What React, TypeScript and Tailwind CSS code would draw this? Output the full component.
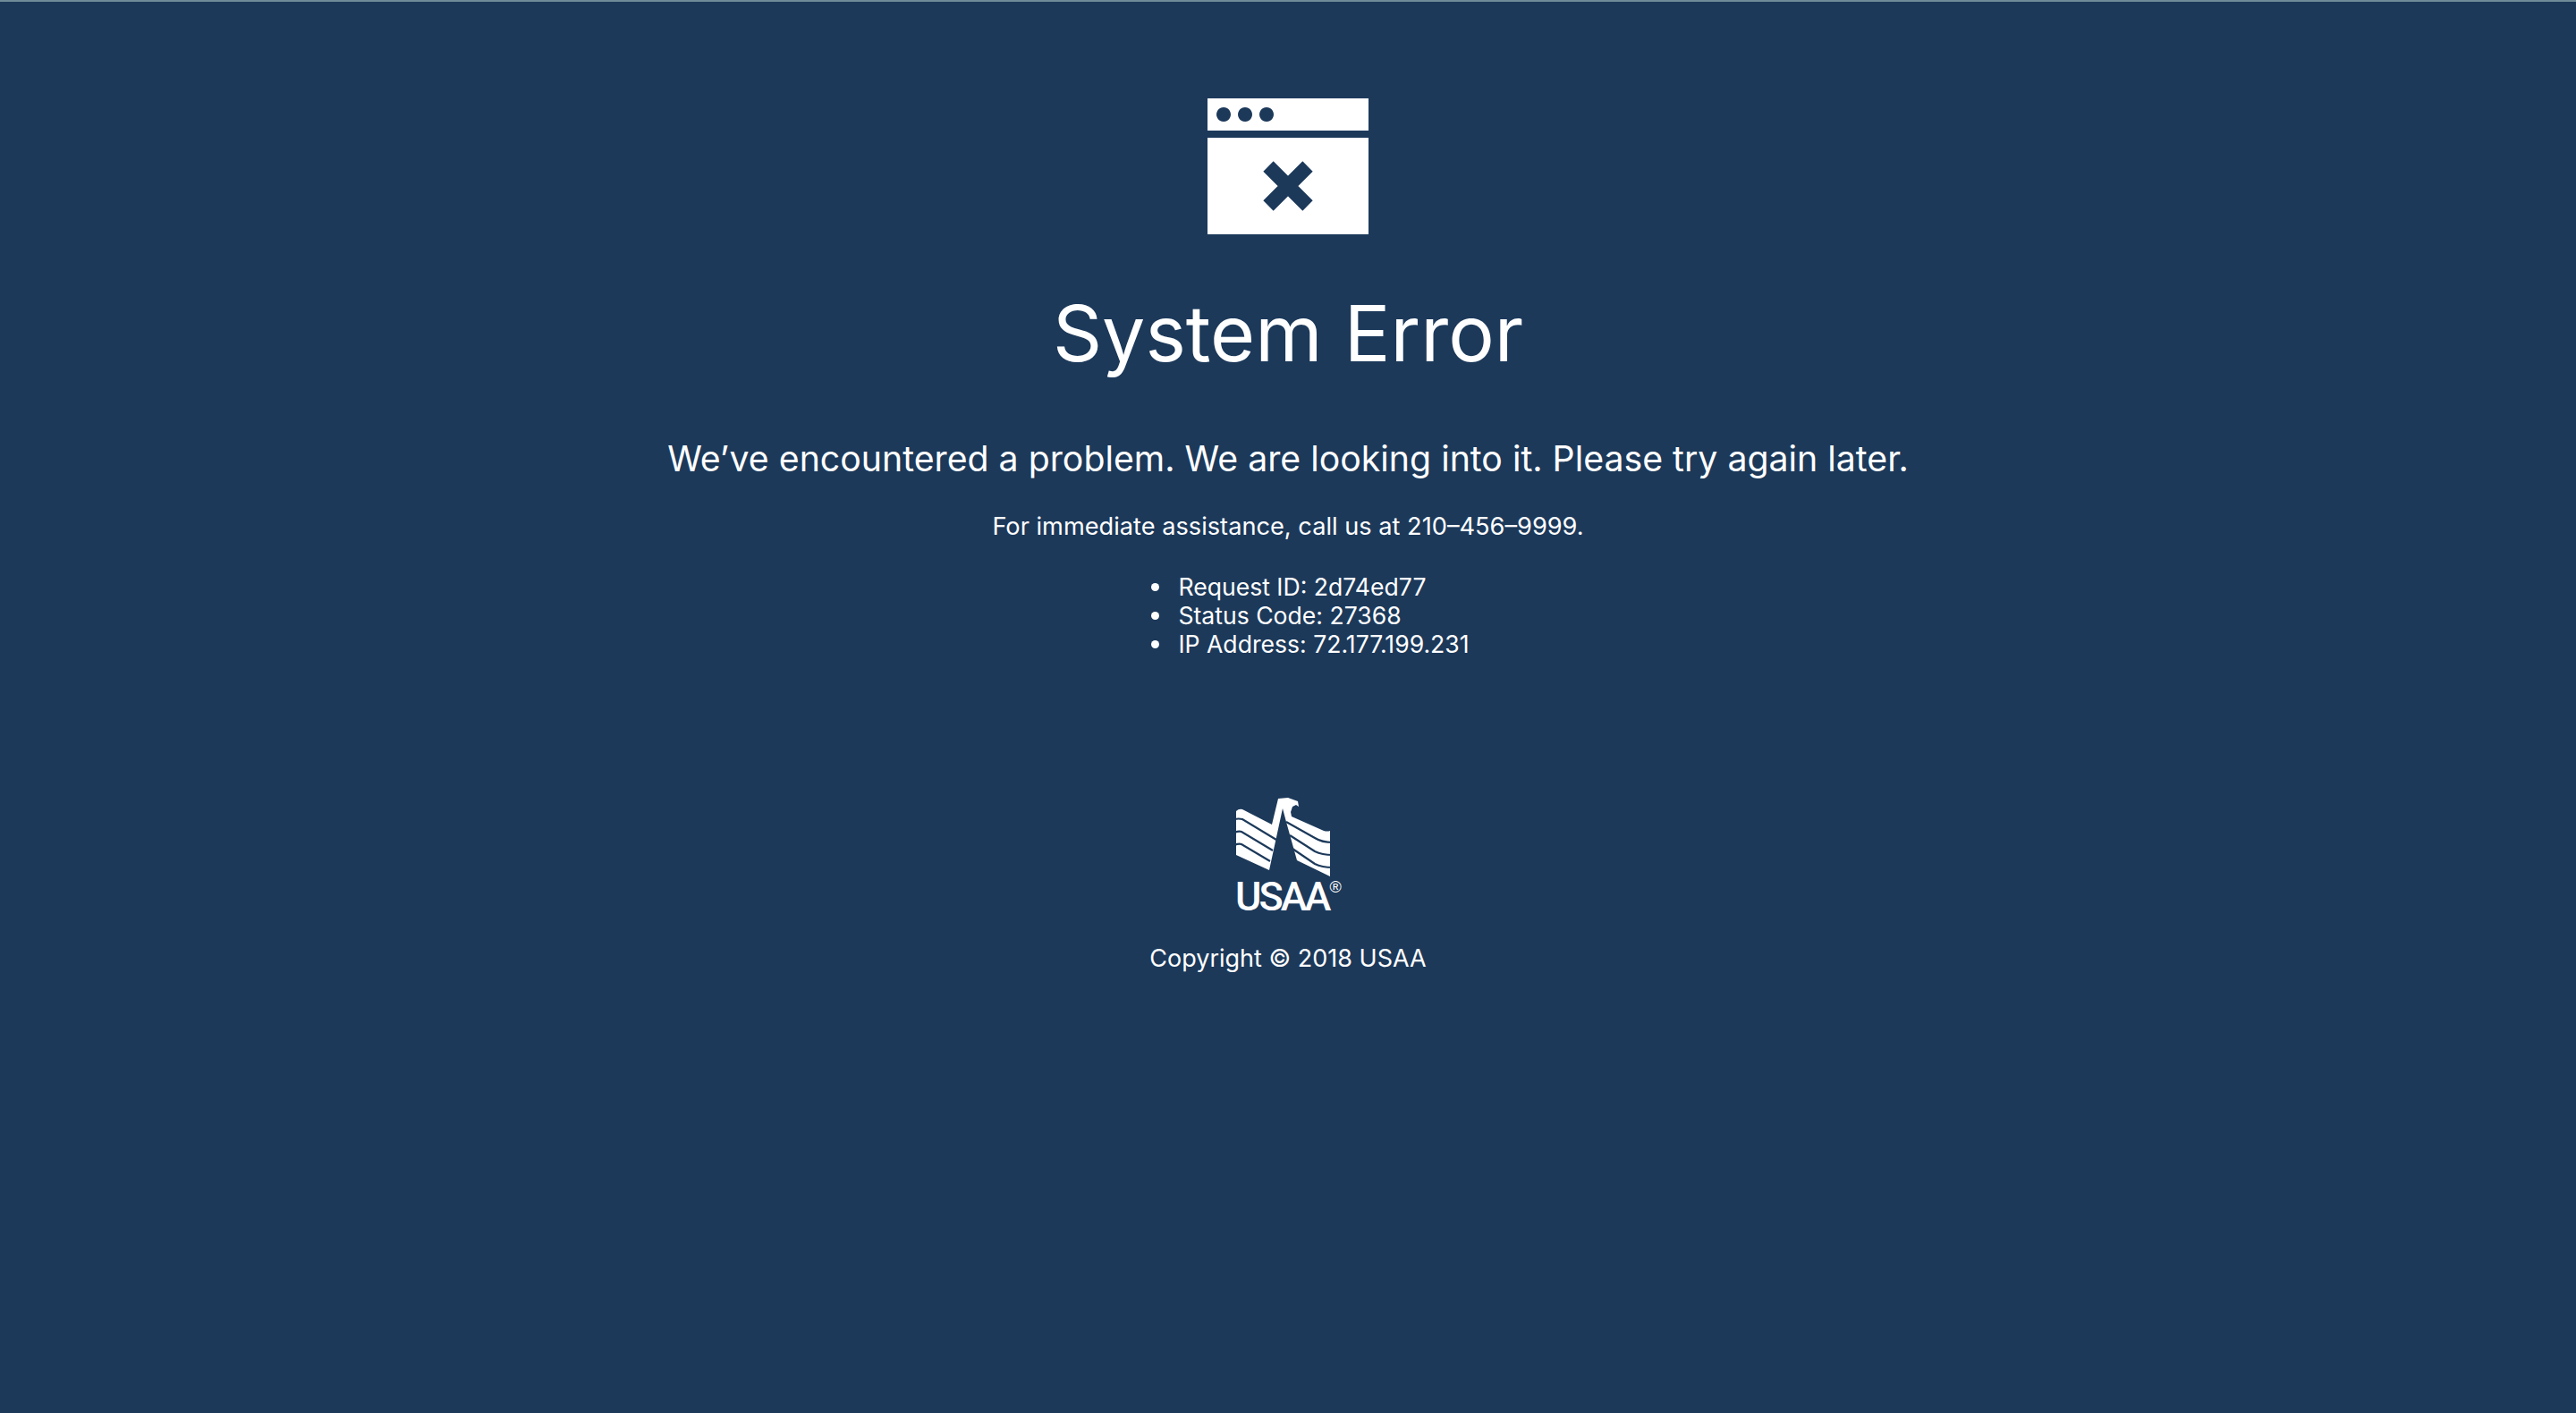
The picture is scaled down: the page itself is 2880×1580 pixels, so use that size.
const font = "font-['Inter','Liberation_Sans',sans-serif]";

function ErrorIcon() {
  return (
    <svg width="180" height="152" viewBox="0 0 180 152" className="block">
      <path
        fill="#fff"
        fillRule="evenodd"
        d="M0 0H180V36H0ZM18 10a8 8 0 1 0 0.01 0ZM42 10a8 8 0 1 0 0.01 0ZM66 10a8 8 0 1 0 0.01 0Z"
      />
      <rect x="0" y="44" width="180" height="108" fill="#fff" />
      <path d="M68 76L112 120M112 76L68 120" stroke="#1c395a" strokeWidth="16" />
    </svg>
  );
}

function UsaaLogo() {
  return (
    <div className="w-[120px]">
      <svg width="110" height="92" viewBox="0 0 110 92" className="block">
        <path
          fill="#fff"
          d="M2 18Q5 15 9 16L42 33L49 4L60 3L71 7L72 13L69 11L65 13L63 19L64 24L100 40Q104 41 107 40L107 91L70 73L58 30L54 15L39 84L2 67Z"
        />
        <g fill="none" stroke="#1c395a" strokeWidth="2.2">
          <path d="M0 27Q5 26 9 27L47 50" />
          <path d="M0 42Q5 40 8 41L43 62" />
          <path d="M0 56Q5 54 8 55L40 74" />
          <path d="M58 30L90 48Q98 53 110 53" />
          <path d="M62 45L90 63Q98 67 110 67" />
          <path d="M65 60L90 77Q98 81 110 81" />
        </g>
      </svg>
      <div className="flex items-start h-[44px] pl-[1px]">
        <span className="font-['Roboto',sans-serif] text-[45px] leading-[44px] font-medium tracking-[-3px]">USAA</span>
        <span className="ml-[1px] font-['Liberation_Sans',sans-serif] text-[18px] leading-[22px]">®</span>
      </div>
    </div>
  );
}

export default function App() {
  const rows = ["Request ID: 2d74ed77", "Status Code: 27368", "IP Address: 72.177.199.231"];
  return (
    <div className={`${font} min-h-[1580px] bg-[#1c395a] text-white flex flex-col items-center border-t-2 border-[#6f8b99]`}>
      <div className="mt-[108px]">
        <ErrorIcon />
      </div>
      <h1 className="mt-[61px] text-[86px] leading-[100px] font-normal">System Error</h1>
      <p className="mt-[65px] text-[39.25px] leading-[50px]">
        We’ve encountered a problem. We are looking into it. Please try again later.
      </p>
      <p className="mt-[33px] text-[27.2px] leading-[36px]">For immediate assistance, call us at 210–456–9999.</p>
      <ul className="mt-[33px] pl-[50px] text-[26.6px] leading-[32px]">
        {rows.map((row) => (
          <li key={row} className="flex items-center gap-[21px]">
            <span className="w-[9px] h-[9px] rounded-full bg-white" />
            {row}
          </li>
        ))}
      </ul>
      <div className="mt-[153px]">
        <UsaaLogo />
      </div>
      <p className="mt-[29px] text-[27px] leading-[36px]">Copyright © 2018 USAA</p>
    </div>
  );
}
